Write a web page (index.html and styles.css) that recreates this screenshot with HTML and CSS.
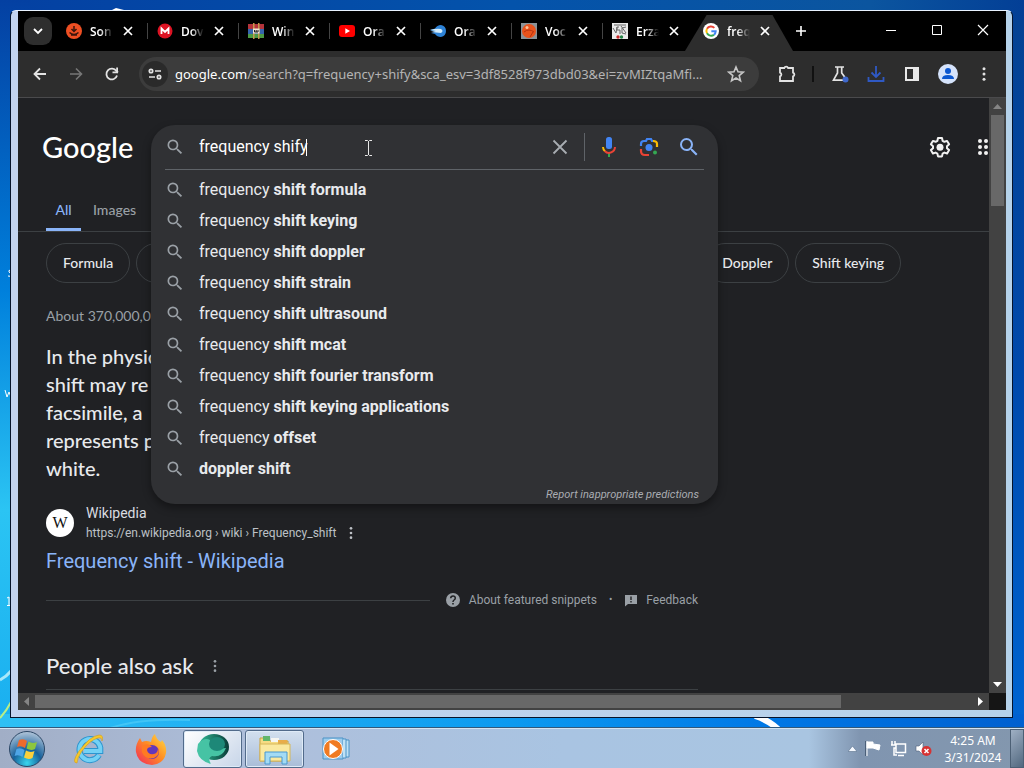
FILE: index.html
```html
<!DOCTYPE html>
<html lang="en">
<head>
<meta charset="utf-8">
<title>frequency shify - Google Search</title>
<link rel="stylesheet" href="styles.css">
</head>
<body>
<svg width="0" height="0" class="defs" aria-hidden="true">
  <symbol id="x" viewBox="0 0 12 12"><path d="M2 2l8 8M10 2l-8 8" stroke="currentColor" stroke-width="1.7" fill="none"/></symbol>
  <symbol id="mag" viewBox="0 0 24 24"><path fill="currentColor" d="M15.5 14h-.79l-.28-.27A6.47 6.47 0 0 0 16 9.5 6.5 6.5 0 1 0 9.5 16c1.61 0 3.09-.59 4.23-1.57l.27.28v.79l5 4.99L20.49 19l-4.99-5zm-6 0C7.01 14 5 11.99 5 9.5S7.01 5 9.5 5 14 7.01 14 9.5 11.99 14 9.5 14z"/></symbol>
  <symbol id="dots" viewBox="0 0 24 24"><g fill="currentColor"><circle cx="12" cy="5" r="2"/><circle cx="12" cy="12" r="2"/><circle cx="12" cy="19" r="2"/></g></symbol>
  <symbol id="goog" viewBox="0 0 48 48"><circle cx="24" cy="24" r="24" fill="#fff"/><g fill="none" stroke-width="6"><path d="M34 14.5A14 14 0 0 0 12 17" stroke="#ea4335"/><path d="M12 17a14 14 0 0 0 0 14" stroke="#fbbc05"/><path d="M12 31a14 14 0 0 0 21 4" stroke="#34a853"/><path d="M33 35a14 14 0 0 0 5-10H25" stroke="#4285f4"/></g></symbol>
</svg>
<div class="desktop">
  <svg class="wallpaper" viewBox="0 0 1024 728" preserveAspectRatio="none" aria-hidden="true">
    <defs>
      <linearGradient id="wl" x1="0" y1="0" x2="0" y2="1"><stop offset="0" stop-color="#0440a2"/><stop offset=".4" stop-color="#0080dc"/><stop offset=".7" stop-color="#2bc4f3"/><stop offset="1" stop-color="#19aef0"/></linearGradient>
      <linearGradient id="wt" x1="0" y1="0" x2="1" y2="0"><stop offset="0" stop-color="#0440a2"/><stop offset=".5" stop-color="#0453ab"/><stop offset=".85" stop-color="#0b559f"/><stop offset="1" stop-color="#033f96"/></linearGradient>
      <linearGradient id="wr" x1="0" y1="0" x2="0" y2="1"><stop offset="0" stop-color="#044293"/><stop offset=".5" stop-color="#0049ac"/><stop offset="1" stop-color="#0065d2"/></linearGradient>
      <linearGradient id="wb" x1="0" y1="0" x2="1" y2="0"><stop offset="0" stop-color="#2fc0f4"/><stop offset=".5" stop-color="#0c9af0"/><stop offset=".75" stop-color="#0078e6"/><stop offset="1" stop-color="#0060d0"/></linearGradient>
    </defs>
    <rect width="1024" height="728" fill="url(#wt)"/>
    <rect width="30" height="728" fill="url(#wl)"/>
    <rect x="1000" y="20" width="24" height="708" fill="url(#wr)"/>
    <rect y="714" width="1024" height="14" fill="url(#wb)"/>
    <path d="M0 680Q6 677 11 671" stroke="#a8e8fa" stroke-width="3" fill="none"/>
    <path d="M0 718Q7 710 11 702" stroke="#b8ee86" stroke-width="2" fill="none"/>
    <path d="M755 716Q768 720 778 729" stroke="#fff" stroke-width="6" fill="none"/>
    <path d="M110 728Q140 718 190 720" stroke="#6fdcfb" stroke-width="2" opacity=".4" fill="none"/>
    <path d="M112 10l4-2 8 2z" fill="#fff"/>
    <path d="M11 270q-3 0-2 2 2 1 2 3t-3 1M5 390l2 7 2-5 2 5M7 598l2-1v8M7 605.500h4" stroke="#fff" fill="none"/>
  </svg>
  <div class="window">
    <div class="tabstrip">
      <button class="tabsearch" aria-label="Search tabs"><svg width="12" height="12" viewBox="0 0 12 12"><path d="M2 4l4 4 4-4" fill="none" stroke="#fff" stroke-width="1.8"/></svg></button>
      <div class="tabs">
        <div class="tab"><svg class="fav" viewBox="0 0 16 16"><circle cx="8" cy="8" r="8" fill="#ee4f23"/><path d="M8 3v5M5.500 6L8 8.500 10.500 6M3.500 9.500q4.500 4 9 0M5 12h6" stroke="#3b150c" stroke-width="1.500" fill="none"/></svg><span class="tt">Son</span><button class="close" aria-label="Close tab"><svg width="12" height="12"><use href="#x"/></svg></button></div>
        <div class="tab"><svg class="fav" viewBox="0 0 16 16"><circle cx="8" cy="8" r="7.500" fill="#dc1323"/><path d="M4.500 11V5.500L8 9l3.500-3.500V11" stroke="#fff" stroke-width="1.800" fill="none"/></svg><span class="tt">Dov</span><button class="close" aria-label="Close tab"><svg width="12" height="12"><use href="#x"/></svg></button></div>
        <div class="tab"><svg class="fav" viewBox="0 0 16 16"><path fill="#b3343c" d="M0 1h16v5H0z"/><path fill="#3665ae" d="M0 6h16v5H0z"/><path fill="#4d9a45" d="M0 11h16v4H0z"/><path fill="#c39a4e" d="M5 0h1.500v16H5zM10 0h1.500v16H10z"/><path fill="#efe5d3" d="M5 5.500h6.500v5H5z"/><path d="M6.500 7v2h3.500V7M8.200 7v2" stroke="#222" fill="none"/></svg><span class="tt">Win</span><button class="close" aria-label="Close tab"><svg width="12" height="12"><use href="#x"/></svg></button></div>
        <div class="tab"><svg class="fav" viewBox="0 0 16 16"><rect y="2" width="16" height="12" rx="3" fill="#f00"/><path d="M6.300 5.300v5.400L11 8z" fill="#fff"/></svg><span class="tt">Ora</span><button class="close" aria-label="Close tab"><svg width="12" height="12"><use href="#x"/></svg></button></div>
        <div class="tab"><svg class="fav" viewBox="0 0 16 16"><path d="M0 7l5-1.500Q7 2 11 2q5 1 5 6t-5 6q-4 0-6-3l-4-1 4-1z" fill="#2d82d6"/><path d="M0 7q7-2 11-1 3 2 0 4L1 9l5-1z" fill="#d3ecfb"/></svg><span class="tt">Ora</span><button class="close" aria-label="Close tab"><svg width="12" height="12"><use href="#x"/></svg></button></div>
        <div class="tab"><svg class="fav" viewBox="0 0 16 16"><path fill="#8b9297" d="M0 0h16v16H0z"/><circle cx="8" cy="8" r="7" fill="#e9531c"/><circle cx="6" cy="4.500" r="1.500" fill="#ffc39b"/><path d="M3 9q5-4 10 0M9 14l3-5" stroke="#b53210" fill="none"/></svg><span class="tt">Voc</span><button class="close" aria-label="Close tab"><svg width="12" height="12"><use href="#x"/></svg></button></div>
        <div class="tab"><svg class="fav" viewBox="0 0 16 16"><path fill="#e9e9e9" d="M0 0h16v16H0z"/><path d="M1 5l3 5 1-6M7 4H5v3h3v4M14 4l-4 1v5l4 1M9 3l5 7M2 2h12" stroke="#666" fill="none"/><circle cx="6" cy="14" r="1.700" fill="#c82828"/><circle cx="9.500" cy="14" r="1.700" fill="#268446"/></svg><span class="tt">Erza</span><button class="close" aria-label="Close tab"><svg width="12" height="12"><use href="#x"/></svg></button></div>
        <div class="tab active"><svg class="fav"><use href="#goog"/></svg><span class="tt">freq</span><button class="close" aria-label="Close tab"><svg width="12" height="12"><use href="#x"/></svg></button></div>
      </div>
      <button class="newtab" aria-label="New tab"><svg width="12" height="12" viewBox="0 0 12 12"><path d="M6 1v10M1 6h10" stroke="#fff" stroke-width="1.600"/></svg></button>
      <div class="winctl">
        <button aria-label="Minimize"><svg width="12" height="12" viewBox="0 0 12 12"><path d="M1 6.500h10" stroke="#fff"/></svg></button>
        <button aria-label="Maximize"><svg width="12" height="12" viewBox="0 0 12 12"><path d="M1.500 1.500h9v9h-9z" stroke="#fff" fill="none"/></svg></button>
        <button aria-label="Close"><svg width="12" height="12" viewBox="0 0 12 12"><path d="M1 1l10 10M11 1L1 11" stroke="#fff" stroke-width="1.200"/></svg></button>
      </div>
    </div>
    <div class="toolbar">
      <button class="tb" aria-label="Back"><svg width="16" height="16" viewBox="0 0 16 16"><path d="M14 8H3M8 2.500L2.500 8 8 13.500" fill="none" stroke="#e3e3e3" stroke-width="1.800"/></svg></button>
      <button class="tb" aria-label="Forward"><svg width="16" height="16" viewBox="0 0 16 16"><path d="M2 8h11M8 2.500L13.500 8 8 13.500" fill="none" stroke="#777" stroke-width="1.600"/></svg></button>
      <button class="tb" aria-label="Reload"><svg width="16" height="16" viewBox="0 0 16 16"><path d="M13 9.500A5.400 5.400 0 1 1 12.300 5L14 6.500" fill="none" stroke="#e3e3e3" stroke-width="1.800"/><path d="M14 1.500v5.700H8.500V5.500h3.700v-4z" fill="#e3e3e3"/></svg></button>
      <div class="omnibox">
        <button class="site" aria-label="Site information"><svg width="14" height="14" viewBox="0 0 14 14" fill="none" stroke="#e3e3e3" stroke-width="1.700"><circle cx="3" cy="4" r="1.700"/><path d="M7 4h6M1 10h6"/><circle cx="11" cy="10" r="1.700"/></svg></button>
        <div class="url"><b>google.com</b>/search?q=frequency+shify&amp;sca_esv=3df8528f973dbd03&amp;ei=zvMIZtqaMfi...</div>
        <button class="star" aria-label="Bookmark"><svg width="18" height="18" viewBox="0 0 18 18"><path d="M9 2l2 4.800 5.200.4-4 3.400 1.300 5.100L9 13l-4.500 2.700 1.300-5.100-4-3.400 5.200-.4z" fill="none" stroke="#c7c7c7" stroke-width="1.600"/></svg></button>
      </div>
      <button class="tb ext" aria-label="Extensions"><svg width="20" height="20" viewBox="0 0 20 20"><path d="M3 4h4.300a2 2 0 0 1 3.800 0H16v4.600a2 2 0 0 1 0 3.800V17H3v-4.600a2 2 0 0 0 0-3.800z" fill="none" stroke="#e3e3e3" stroke-width="1.800"/></svg></button>
      <span class="tsep"></span>
      <button class="tb" aria-label="Labs"><svg width="20" height="20" viewBox="0 0 20 20"><path d="M5 3h9M7.500 3v6L3.500 16.200H14M11.700 3v6l3 4" fill="none" stroke="#e3e3e3" stroke-width="1.700"/><circle cx="15.500" cy="15.500" r="3" fill="#3f68cc"/></svg></button>
      <button class="tb" aria-label="Downloads"><svg width="20" height="20" viewBox="0 0 20 20"><path d="M10 2v11M5.500 8.500L10 13l4.500-4.500M2.500 13v4h15v-4" fill="none" stroke="#2f59c4" stroke-width="1.800"/></svg></button>
      <button class="tb" aria-label="Side panel"><svg width="16" height="16" viewBox="0 0 16 16"><path d="M1 1h14v14H1z" fill="#e8e8e8"/><path d="M3 3h6v10H3z" fill="#2d2d2d"/></svg></button>
      <button class="tb" aria-label="Profile"><svg width="20" height="20" viewBox="0 0 20 20"><circle cx="10" cy="10" r="10" fill="#d5e3fb"/><circle cx="10" cy="7" r="3" fill="#0b57d0"/><path d="M4 15q0-4 6-4t6 4z" fill="#0b57d0"/></svg></button>
      <button class="tb menu" aria-label="Menu"><svg width="18" height="18"><use href="#dots"/></svg></button>
    </div>
    <div class="view">
      <main class="page">
        <header>
          <a class="logo" href="#">Google</a>
          <form class="search" onsubmit="return false">
            <div class="panel">
              <div class="box">
                <svg class="mag" width="20" height="20"><use href="#mag"/></svg>
                <div class="field"><input type="text" aria-label="Search" value="frequency shify"><i class="caret"></i></div>
                <button class="clear" aria-label="Clear"><svg width="20" height="20" viewBox="0 0 20 20"><path d="M3.500 3.500l13 13M16.500 3.500l-13 13" stroke="currentColor" stroke-width="1.800" fill="none"/></svg></button>
                <button class="tool mic" aria-label="Search by voice"><svg width="24" height="24" viewBox="0 0 24 24"><rect x="9" y="2" width="6" height="12" rx="2.500" fill="#4285f4"/><path d="M11 18h2v4h-2z" fill="#34a853"/><path d="M6 12a6 6 0 0 0 2 4.300" fill="none" stroke="#fbbc04" stroke-width="2"/><path d="M7.700 16a6 6 0 0 0 10.300-4" fill="none" stroke="#ea4335" stroke-width="2"/></svg></button>
                <button class="tool" aria-label="Search by image"><svg width="24" height="24" viewBox="0 0 24 24"><circle cx="12" cy="12.500" r="3.500" fill="#4285f4"/><circle cx="18" cy="17.500" r="2" fill="#34a853"/><g fill="none" stroke-width="2.200"><path d="M4 11V9q0-3 3-3h2l1-2h4l1 2h2" stroke="#4285f4"/><path d="M16 6q4 0 4 3v3" stroke="#fbbc04"/><path d="M4 14v2q0 4 4 4h4" stroke="#ea4335"/></g></svg></button>
                <button class="tool go" aria-label="Search"><svg width="24" height="24"><use href="#mag"/></svg></button>
              </div>
              <ul>
                <li><svg class="mag" width="20" height="20"><use href="#mag"/></svg><span>frequency <b>shift formula</b></span></li>
                <li><svg class="mag" width="20" height="20"><use href="#mag"/></svg><span>frequency <b>shift keying</b></span></li>
                <li><svg class="mag" width="20" height="20"><use href="#mag"/></svg><span>frequency <b>shift doppler</b></span></li>
                <li><svg class="mag" width="20" height="20"><use href="#mag"/></svg><span>frequency <b>shift strain</b></span></li>
                <li><svg class="mag" width="20" height="20"><use href="#mag"/></svg><span>frequency <b>shift ultrasound</b></span></li>
                <li><svg class="mag" width="20" height="20"><use href="#mag"/></svg><span>frequency <b>shift mcat</b></span></li>
                <li><svg class="mag" width="20" height="20"><use href="#mag"/></svg><span>frequency <b>shift fourier transform</b></span></li>
                <li><svg class="mag" width="20" height="20"><use href="#mag"/></svg><span>frequency <b>shift keying applications</b></span></li>
                <li><svg class="mag" width="20" height="20"><use href="#mag"/></svg><span>frequency <b>offset</b></span></li>
                <li><svg class="mag" width="20" height="20"><use href="#mag"/></svg><span><b>doppler shift</b></span></li>
              </ul>
              <a class="report" href="#">Report inappropriate predictions</a>
              <svg class="ibeam" width="9" height="16" viewBox="0 0 9 16"><path d="M1 .5h2.500l1 1 1-1H8M1 15.500h2.500l1-1 1 1H8M4.500 1v14" fill="none" stroke="#e8e8e8"/></svg>
            </div>
          </form>
          <button class="gear" aria-label="Settings"><svg width="24" height="24" viewBox="0 0 24 24"><path d="M10 3h4l.6 2.800 1.800 1 2.700-.9 2 3.400-2.100 1.900v2l2.100 1.900-2 3.400-2.700-.9-1.800 1L14 21.400h-4l-.6-2.800-1.800-1-2.700.9-2-3.400L5 13.200v-2L2.900 9.300l2-3.400 2.700.9 1.800-1z" fill="none" stroke="#f1f1f1" stroke-width="2" stroke-linejoin="round"/><circle cx="12" cy="12.200" r="3.500" fill="#f1f1f1"/></svg></button>
          <button class="apps" aria-label="Google apps"><svg width="12" height="18" viewBox="0 0 12 18" fill="#f1f1f1"><circle cx="2" cy="3" r="2"/><circle cx="8" cy="3" r="2"/><circle cx="2" cy="9" r="2"/><circle cx="8" cy="9" r="2"/><circle cx="2" cy="15" r="2"/><circle cx="8" cy="15" r="2"/></svg></button>
        </header>
        <nav><a class="on" href="#">All</a><a href="#">Images</a></nav>
        <div class="chips"><a href="#">Formula</a><span class="chip-fill"></span><a href="#">Doppler</a><a href="#">Shift keying</a></div>
        <section class="results">
          <p class="stats">About 370,000,0</p>
          <p class="snippet">In the physic<br>shift may re<br>facsimile, a<br>represents p<br>white.</p>
          <div class="source">
            <span class="wiki">W</span>
            <div><div class="name">Wikipedia</div><div class="cite"><span>https://en.wikipedia.org › wiki › Frequency_shift</span><svg width="16" height="16"><use href="#dots"/></svg></div></div>
          </div>
          <h3><a href="#">Frequency shift - Wikipedia</a></h3>
          <div class="about">
            <hr>
            <a href="#"><svg width="16" height="16" viewBox="0 0 16 16"><circle cx="8" cy="8" r="7" fill="#9aa0a6"/><path d="M5.700 6.200q.2-2.200 2.300-2.200t2.300 2q0 1.200-1.200 2T8 10" fill="none" stroke="#202124" stroke-width="1.500"/><path d="M7.200 11h1.600v1.600H7.200z" fill="#202124"/></svg>About featured snippets</a>
            <span class="bullet">•</span>
            <a href="#"><svg width="14" height="14" viewBox="0 0 14 14"><path d="M1 2h12v9H4l-3 2.500z" fill="#9aa0a6"/><path d="M7 3.500v3.500M7 8v1.500" stroke="#202124" stroke-width="1.400"/></svg>Feedback</a>
          </div>
          <h2>People also ask<svg width="16" height="16"><use href="#dots"/></svg></h2>
        </section>
      </main>
      <div class="vscroll"><svg width="9" height="5"><path d="M0 5l4.500-5L9 5z" fill="#858585"/></svg><span></span><svg width="9" height="5"><path d="M0 0h9L4.500 5z" fill="#fff"/></svg></div>
      <div class="hscroll"><svg width="5" height="9"><path d="M5 0v9L0 4.500z" fill="#858585"/></svg><span></span><svg width="5" height="9"><path d="M0 0v9l5-4.500z" fill="#fff"/></svg></div>
      <div class="corner"></div>
    </div>
  </div>
</div>
<footer class="taskbar">
  <button class="task start" aria-label="Start"><svg width="38" height="38" viewBox="0 0 38 38"><defs><radialGradient id="orb" cx=".5" cy=".9" r=".9"><stop offset="0" stop-color="#39d6ee"/><stop offset=".45" stop-color="#17619b"/><stop offset="1" stop-color="#b3c6da"/></radialGradient></defs><circle cx="19" cy="19" r="17.500" fill="url(#orb)" stroke="#2c4766"/><path d="M11 10q5-2 8 1l-2 7q-4-3-8-1z" fill="#ee6a2c"/><path d="M20.500 11.500q4 2.500 8.500.5l-2 7q-4 2-8.500-.5z" fill="#8cc63e"/><path d="M8.500 19q4-2 8 1l-2 7q-4-3-8-1z" fill="#4fa5e6"/><path d="M18 20.500q4 2.500 8.500.5l-2 7q-4 2-8.500-.5z" fill="#fbd03c"/></svg></button>
  <button class="task ie" aria-label="Internet Explorer"><svg width="34" height="34" viewBox="0 0 34 34"><path d="M27 23a10.500 10.500 0 1 1 1.300-7.300v3.300H12" fill="none" stroke="#2c95cf" stroke-width="6"/><path d="M27 23a10.500 10.500 0 1 1 1.300-7.300v3.300H12" fill="none" stroke="#73d1f5" stroke-width="4"/><path d="M5 31Q-1 31 7 19 18 4 27 3q5 0 3 6 0-4-4-3-8 2-16 13-5 7-5 12z" fill="#f5c92b" stroke="#d69a18" stroke-width=".6"/></svg></button>
  <button class="task ff" aria-label="Firefox"><svg width="34" height="34" viewBox="0 0 34 34"><defs><linearGradient id="fx" x1="1" y1="0" x2="0" y2="1"><stop offset="0" stop-color="#ffe14a"/><stop offset=".45" stop-color="#ff9023"/><stop offset="1" stop-color="#f2245c"/></linearGradient></defs><path d="M17 10q1-6 4-8 1 5 6 8l1-2q5 6 4 13-2 11-14 12Q4 32 2 20 1 13 6 6l2 4q4-2 9 0z" fill="url(#fx)"/><circle cx="18" cy="20" r="7" fill="#6437b9"/><path d="M8 14q6-4 10 1-5 0-5 3 1 5 7 4 4-1 4-6 3 7-4 10-9 2-12-6z" fill="#ff7a22"/></svg></button>
  <button class="task open front" aria-label="Browser"><svg width="36" height="34" viewBox="0 0 36 34"><defs><linearGradient id="gr"><stop offset="0" stop-color="#2fb793"/><stop offset="1" stop-color="#0a3b38"/></linearGradient></defs><ellipse cx="19" cy="15" rx="15" ry="13" fill="url(#gr)"/><path d="M3 12q6-7 12-4 0 10 16 8-4 10-14 8-5 2-1 8Q4 29 2 19z" fill="#46c3a4"/><ellipse cx="22" cy="12" rx="8" ry="7" fill="#1d8878"/></svg></button>
  <button class="task open" aria-label="Explorer"><svg width="36" height="34" viewBox="0 0 36 34"><path d="M3 6h8l2 3h18v20H3z" fill="#f5dc83" stroke="#c7a042"/><path d="M6 4h7v5H6z" fill="#62b66c"/><path d="M14 6h8v4h-8z" fill="#f6f6f2"/><path d="M21 8h9v4h-9z" fill="#e8ad4a"/><path d="M3 12h30v17H3z" fill="#fae99f" stroke="#d6b758"/><path d="M8 32V20h22v12h-5v-7H13v7z" fill="#a3dbf4" stroke="#4998cf"/></svg></button>
  <button class="task wmp" aria-label="Media Player"><svg width="30" height="30" viewBox="0 0 30 30"><path d="M3 4h20v21H3z" fill="#9ccced" stroke="#4a93c6"/><path d="M23 5h3v19h-3M26 6h3v17h-3" fill="#bfe1f5" stroke="#4a93c6"/><circle cx="13" cy="15" r="9.500" fill="#f07b22" stroke="#fff"/><path d="M9.500 8.500v13l9-6.500z" fill="#fff"/></svg></button>
  <div class="tray">
    <svg width="9" height="6"><path d="M0 5.500L4.500 0 9 5.500z" fill="#f5f9ff" stroke="#59708b" stroke-width=".6"/></svg>
    <svg width="17" height="17" viewBox="0 0 17 17"><path d="M2 1v15M2 2h6v6H2zM8 4l7 1-1 5-6-2z" fill="#fff" stroke="#fff"/><path d="M.5 1v15" stroke="#4b5f78"/></svg>
    <svg width="17" height="17" viewBox="0 0 17 17"><path d="M6 4h9.500v8.500H6zM8 15.500h6M2 1v4M5 1v4M1 5h5v3H4v7h3" fill="none" stroke="#fff" stroke-width="1.500"/></svg>
    <svg width="17" height="17" viewBox="0 0 17 17"><path d="M1 6h3l4-4v13l-4-4H1z" fill="#fff" stroke="#4d607a" stroke-width=".6"/><circle cx="11.500" cy="11" r="5" fill="#d73232"/><path d="M9.500 9l4 4M13.500 9l-4 4" stroke="#fff" stroke-width="1.500"/></svg>
  </div>
  <div class="clock">4:25 AM<br>3/31/2024</div>
  <button class="peek" aria-label="Show desktop"></button>
</footer>
</body>
</html>
```
FILE: styles.css
```css
* { box-sizing: border-box; }
html, body { height: 100%; margin: 0; }
body { display: flex; flex-direction: column; overflow: hidden; background: #0453ab; font-family: Roboto, sans-serif; }
button { border: 0; padding: 0; margin: 0; background: none; color: inherit; display: flex; align-items: center; justify-content: center; flex: none; }
svg { display: block; flex: none; }
a { text-decoration: none; color: inherit; }
p, h2, h3, ul { margin: 0; padding: 0; font-weight: 400; }
.defs { position: absolute; }

.desktop { flex: 1; min-height: 0; position: relative; display: flex; padding: 10px 11px 10px 10px; }
.wallpaper { position: absolute; inset: 0; width: 100%; height: 100%; }
.window { position: relative; flex: 1; min-width: 0; display: flex; flex-direction: column; border: 1px solid #06142b; border-top-color: #e9f3ff; border-radius: 6px 6px 0 0; padding: 0 6px 7px 7px; background: linear-gradient(90deg, #c2d3ef, #b5d2ea); }

.tabstrip { height: 40px; flex: none; display: flex; align-items: center; background: #000; padding-left: 6px; }
.tabsearch { width: 28px; height: 28px; border-radius: 9px; background: #2e2e2e; margin-right: 5px; }
.tabs { display: flex; align-self: stretch; }
.tab { position: relative; isolation: isolate; display: flex; align-items: center; width: 91px; padding-left: 9px; color: #fff; }
.tab::after { content: ""; position: absolute; right: 0; top: 12px; width: 1px; height: 16px; background: #444; }
.tab:nth-child(7)::after, .tab.active::after { display: none; }
.tab.active::before { content: ""; position: absolute; z-index: -1; inset: 4px -8px 0 -9px; background: #2d2d2d; clip-path: polygon(20% 0, 81% 0, 100% 100%, 0 100%); }
.fav { width: 16px; height: 16px; margin-right: 8px; }
.tt { width: 26px; padding-top: 2px; overflow: hidden; font: 600 12px/18px "Open Sans", sans-serif; white-space: nowrap; -webkit-mask-image: linear-gradient(90deg, #000 40%, transparent 88%); mask-image: linear-gradient(90deg, #000 40%, transparent 88%); }
.close { margin-left: 6px; }
.newtab { width: 20px; height: 28px; margin-left: 6px; }
.winctl { display: flex; margin-left: auto; align-self: stretch; }
.winctl button { width: 46px; height: 38px; }

.toolbar { flex: none; height: 47px; display: flex; align-items: center; padding: 0 4px; background: #2d2d2d; border-bottom: 1px solid #4a4a4c; }
.tb { width: 36px; height: 34px; color: #e3e3e3; }
.ext { margin-left: 10px; }
.tsep { width: 2px; height: 16px; margin: 0 8px 0 7px; background: #111; }
.omnibox { flex: 1; min-width: 0; margin-left: 9px; height: 34px; border-radius: 17px; background: #3c3c3c; display: flex; align-items: center; padding: 0 14px 0 3px; }
.site { width: 26px; height: 26px; border-radius: 13px; background: #2a2a2a; }
.url { flex: 1; min-width: 0; margin-left: 7px; overflow: hidden; white-space: nowrap; color: #b4b4b4; font: 13px/20px "Noto Sans", sans-serif; }
.url b { color: #fff; font-weight: 400; }

.view { flex: 1; min-height: 0; display: grid; grid-template: minmax(0, 1fr) 17px / minmax(0, 1fr) 17px; }
.page { overflow: hidden; background: #202124; color: #e8eaed; }
header { display: flex; align-items: center; padding: 27px 0 0 24px; }
.logo { width: 109px; color: #fff; font: 500 29px/44px Lato, sans-serif; }
.search { position: relative; flex: 1; max-width: 567px; height: 44px; }
.panel { position: absolute; z-index: 2; left: 0; right: 0; top: 0; background: #303134; border-radius: 24px; box-shadow: 0 4px 8px rgba(0,0,0,.4); }
.box { display: flex; align-items: center; height: 45px; margin: 0 14px; border-bottom: 1px solid #5f6368; }
.mag { color: #9aa0a6; margin-right: 14px; }
.field { flex: 1; display: flex; align-items: center; position: relative; }
.field input { width: 100%; border: 0; padding: 0; outline: 0; background: none; color: #fff; font: 16px/24px Roboto, sans-serif; }
.caret { position: absolute; left: 107px; top: 4px; width: 1px; height: 17px; background: #fff; }
.clear { color: #a8adb2; margin-right: 14px; }
.tool { width: 40px; height: 28px; }
.mic { width: 45px; padding-left: 4px; border-left: 1px solid #5f6368; }
.go { color: #8ab4f8; margin-right: -5px; }
.panel ul { list-style: none; padding: 4px 14px 0; }
.panel li { display: flex; align-items: center; height: 31px; font-size: 16px; }
.panel b { font-weight: 700; }
.report { display: block; padding: 2px 19px 0; text-align: right; font: italic 11px/18px Roboto, sans-serif; color: #aaadb2; }
.ibeam { position: absolute; left: 213px; top: 15px; }
.gear { margin-left: auto; }
.apps { margin: 0 0 0 26px; width: 11px; overflow: hidden; justify-content: flex-start; }

nav { display: flex; height: 43px; margin-top: 20px; padding-left: 28px; border-bottom: 1px solid #3c4043; font: 500 14px/20px Lato, sans-serif; color: #9aa0a6; }
nav a { padding: 11px 0 0; margin-right: 12px; }
nav .on { width: 35px; text-align: center; color: #8ab4f8; border-bottom: 3px solid #8ab4f8; }
.chips { display: flex; gap: 6px; margin-top: 11px; padding-left: 28px; }
.chips > * { height: 40px; flex: none; border: 1px solid #3c4043; border-radius: 20px; padding: 0 16px; font: 500 14px/38px Lato, sans-serif; }
.chip-fill { width: 563px; }
.results { width: 680px; padding-left: 28px; }
.stats { margin-top: 23px; font: 14px/20px Lato, sans-serif; color: #9aa0a6; }
.snippet { margin-top: 16px; font: 500 20px/28px Lato, sans-serif; }
.source { display: flex; align-items: center; gap: 12px; margin-top: 21px; }
.wiki { width: 28px; height: 28px; border-radius: 14px; background: #fff; color: #111; text-align: center; font: 16px/28px "Liberation Serif", serif; }
.name { font-size: 14px; line-height: 20px; color: #dadce0; }
.cite { display: flex; align-items: center; gap: 7px; font-size: 12px; line-height: 20px; color: #bdc1c6; }
h3 { margin-top: 4px; font-size: 20px; line-height: 28px; color: #8ab4f8; }
.about { display: flex; align-items: center; margin-top: 15px; line-height: 20px; font-size: 12px; color: #9aa0a6; }
.about hr { flex: 1; margin: 0 15px 0 0; border: 0; border-top: 1px solid #3c4043; }
.about a { display: flex; align-items: center; gap: 8px; }
.bullet { margin: 0 12px; font-size: 10px; }
h2 { display: flex; align-items: center; gap: 13px; margin-top: 42px; padding-bottom: 9px; border-bottom: 1px solid #3c4043; font: 500 22px/28px Lato, sans-serif; }
h2 svg { color: #9aa0a6; }

.vscroll { display: flex; flex-direction: column; align-items: center; background: #424242; padding: 6px 0; }
.vscroll span { width: 13px; height: 91px; background: #686868; margin: 6px 0 auto; }
.hscroll { display: flex; align-items: center; background: #424242; padding: 0 6px; }
.hscroll span { width: 84%; height: 13px; background: #686868; margin: 0 auto 0 6px; }
.corner { background: #151515; }

.taskbar { position: relative; flex: none; height: 40px; display: flex; align-items: center; border-top: 1px solid #d4e4f2; background: linear-gradient(90deg, #a1aec6 0, #aebfdb 25%, #a9c4e2 55%, #a9c5e1 79%, #8095b0 84%, #8397ae 100%); box-shadow: 0 -1px #31597c; }
.task { width: 62px; height: 38px; }
.start { width: 54px; }
.ie { margin-left: 4px; }
.open { border: 1px solid #526b8b; border-radius: 3px; width: 59px; margin-left: 3px; background: linear-gradient(#d3e0ef, #a9bdd8); box-shadow: inset 0 0 0 1px #dfebf7; }
.ff { width: 61px; }
.front { margin-left: 2px; background: linear-gradient(135deg, #fff, #c7d5e8); }
.tray { display: flex; align-items: center; gap: 8px; margin: 0 4px 0 auto; }
.clock { width: 74px; text-align: center; color: #fff; font: 12px/17px "Noto Sans", sans-serif; }
.peek { width: 14px; height: 39px; border: 1px solid #4c6075; background: linear-gradient(135deg, #9fb0c4, #52687f); }
```
